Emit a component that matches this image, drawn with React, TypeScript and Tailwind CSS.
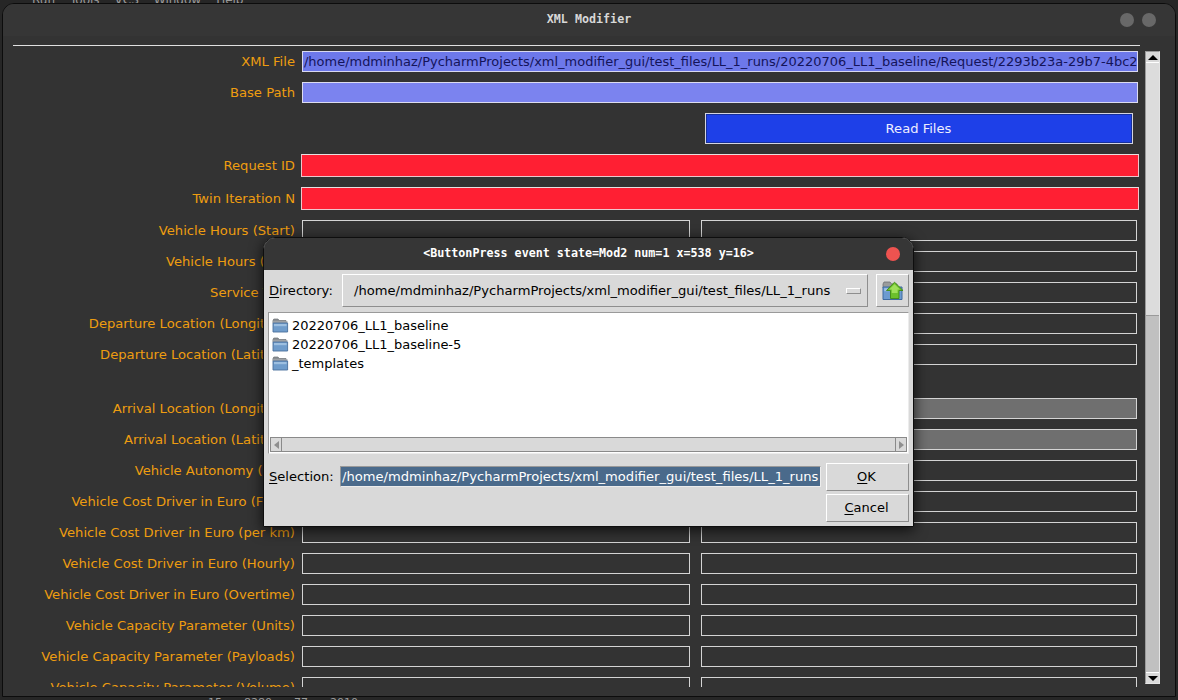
import React from "react";

const FONT = "font-['DejaVu_Sans',sans-serif]";
const MONO = "font-['DejaVu_Sans_Mono',monospace]";

const XML_PATH =
  "/home/mdminhaz/PycharmProjects/xml_modifier_gui/test_files/LL_1_runs/20220706_LL1_baseline/Request/2293b23a-29b7-4bc2";

function Label({ children }: { children: React.ReactNode }) {
  return (
    <div className="w-[282px] shrink-0 text-right text-[13.15px] leading-[21px] whitespace-nowrap text-[#ee9d10] flex justify-end items-center">
      {children}
    </div>
  );
}

function PairRow({ label, filled }: { label: string; filled?: boolean }) {
  return (
    <div className="flex h-[21px] shrink-0 items-stretch">
      <Label>{label}</Label>
      <div className="ml-[7px] w-[388px] border border-[#d4d4d4]" />
      <div
        className={
          filled
            ? "ml-[11px] w-[436px] border border-[#d4d4d4] bg-[#6f6f6f]"
            : "ml-[11px] w-[436px] border border-[#d4d4d4]"
        }
      />
    </div>
  );
}

function RedRow({ label }: { label: string }) {
  return (
    <div className="flex h-[23px] shrink-0 items-stretch">
      <Label>{label}</Label>
      <div className="ml-[6px] w-[838px] border border-[#efc6cc] border-t-[#e8e0e0] bg-[#ff1f33]" />
    </div>
  );
}

function FolderIcon() {
  return (
    <svg width="17" height="15" viewBox="0 0 17 15" className="shrink-0">
      <path d="M1 2.5 L1.8 1 H6 L7.2 2.5 H14 V5 H1 Z" fill="#8b8f94" stroke="#6e7277" strokeWidth="0.7" />
      <rect x="0.7" y="3.2" width="14.8" height="2" fill="#a3a7ab" />
      <path d="M1 5 H15.6 V14 H1 Z" fill="#6f9ccb" stroke="#4a6f9c" strokeWidth="0.9" />
      <rect x="2" y="6" width="12.6" height="2.2" fill="#9dbfe0" />
    </svg>
  );
}

function UpFolderIcon() {
  return (
    <svg width="22" height="20" viewBox="0 0 22 20">
      <path d="M1 3 L2 1 H8 L9.5 3 H15 V7 H1 Z" fill="#9a9c9c" stroke="#6f7173" strokeWidth="0.8" />
      <path d="M1 6 H20 V18.5 H1 Z" fill="#6c9bd0" stroke="#3f6aa0" strokeWidth="1" />
      <rect x="2.2" y="7.2" width="16.6" height="3" fill="#a0c2e4" />
      <path d="M12.5 1.2 L21 9.5 H17 V17.5 H8.5 V9.5 H4.5 Z" fill="#6cc02c" stroke="#3f8a12" strokeWidth="0.9" />
      <path d="M12.5 3.2 L18 8.6 H15.6 V12 H9.8 V8.6 H7.2 Z" fill="#9fe05a" />
    </svg>
  );
}

function U({ children }: { children: React.ReactNode }) {
  return <span className="underline underline-offset-2 decoration-1">{children}</span>;
}

const raised =
  "border-[1.5px] border-t-white border-l-white border-r-[#8e8e8e] border-b-[#8e8e8e]";

function Dialog() {
  return (
    <div className="absolute left-[263px] top-[237px] flex h-[290px] w-[651px] flex-col overflow-hidden rounded-t-[12px] border border-[#0e0e0e] bg-[#d9d9d9] shadow-[0_3px_14px_rgba(0,0,0,0.75)]">
      <div className="relative flex h-[32px] shrink-0 items-center justify-center bg-[#363636]">
        <span className={`${MONO} text-[11.7px] font-bold text-white whitespace-nowrap`}>
          {"<ButtonPress event state=Mod2 num=1 x=538 y=16>"}
        </span>
        <span className="absolute right-[13px] top-[9px] h-[14px] w-[14px] rounded-full bg-[#ee5350]" />
      </div>

      <div className="flex flex-1 flex-col pl-[5px] pr-[4px] pt-[4px] text-[13px] text-black">
        <div className="flex h-[33px] shrink-0 items-center">
          <span className="w-[73px] shrink-0 whitespace-nowrap text-[13.1px]">
            <U>D</U>irectory:
          </span>
          <div className={`flex h-full w-[526px] shrink-0 items-center justify-between pl-[11px] pr-[6px] ${raised}`}>
            <span className="whitespace-nowrap text-[13.1px]">
              /home/mdminhaz/PycharmProjects/xml_modifier_gui/test_files/LL_1_runs
            </span>
            <span className={`block h-[6px] w-[15px] ${raised}`} />
          </div>
          <div className={`ml-[8px] flex h-full w-[33px] shrink-0 items-center justify-center ${raised}`}>
            <UpFolderIcon />
          </div>
        </div>

        <div className="-ml-px mt-[5px] flex h-[142px] w-[641px] shrink-0 flex-col border border-[#ececec] border-t-[#9a9a9a] border-l-[#9a9a9a] bg-white">
          <div className="flex flex-1 flex-col pl-[3px] pt-[3px]">
            {["20220706_LL1_baseline", "20220706_LL1_baseline-5", "_templates"].map((name) => (
              <div key={name} className="flex h-[19px] items-center gap-[3px] whitespace-nowrap">
                <FolderIcon />
                <span>{name}</span>
              </div>
            ))}
          </div>
          <div className="mx-[1px] mb-[1px] flex h-[15px] shrink-0 items-stretch border border-[#8a8a8a] bg-[#d9d9d9]">
            <div className="flex w-[11px] items-center justify-center border-r border-[#8a8a8a]">
              <span className="h-0 w-0 border-y-[4px] border-r-[5px] border-y-transparent border-r-[#8f8f8f]" />
            </div>
            <div className="flex-1" />
            <div className="flex w-[11px] items-center justify-center border-l border-[#8a8a8a]">
              <span className="h-0 w-0 border-y-[4px] border-l-[5px] border-y-transparent border-l-[#8f8f8f]" />
            </div>
          </div>
        </div>

        <div className="mt-[9px] flex flex-1">
          <div className="flex h-[28px] w-[557px] shrink-0 items-start">
            <span className="w-[71px] shrink-0 whitespace-nowrap text-[13.1px] leading-[27px]">
              <U>S</U>election:
            </span>
            <div className="mt-[3px] h-[21px] w-[481px] shrink-0 overflow-hidden border border-[#999] border-r-[#ececec] border-b-[#ececec] bg-[#4a6a8b] pl-[1px] text-[13.1px] leading-[19px] whitespace-nowrap text-white">
              /home/mdminhaz/PycharmProjects/xml_modifier_gui/test_files/LL_1_runs
            </div>
          </div>
          <div className="flex w-[83px] shrink-0 flex-col gap-[3px]">
            <div className={`flex h-[28px] items-center justify-center pr-[2px] ${raised}`}>
              <span>
                <U>O</U>K
              </span>
            </div>
            <div className={`flex h-[28px] items-center justify-center pr-[2px] ${raised}`}>
              <span>
                <U>C</U>ancel
              </span>
            </div>
          </div>
        </div>
      </div>
    </div>
  );
}

function Scrollbar() {
  return (
    <div className="mt-[15px] flex h-[633px] w-[15px] shrink-0 flex-col border-[1.5px] border-[#e4e4e4] border-l-[#9a9a9a] border-t-[#9a9a9a] bg-[#c0c0c0]">
      <div className="flex h-[11px] shrink-0 items-center justify-center border-b border-white bg-[#d9d9d9]">
        <span className="h-0 w-0 border-x-[5px] border-b-[5px] border-x-transparent border-b-black" />
      </div>
      <div className="h-[253px] shrink-0 border-b border-[#9a9a9a] bg-[#dcdcdc]" />
      <div className="flex-1" />
      <div className="flex h-[11px] shrink-0 items-center justify-center border-t border-white bg-[#d9d9d9]">
        <span className="h-0 w-0 border-x-[5px] border-t-[5px] border-x-transparent border-t-black" />
      </div>
    </div>
  );
}

export default function App() {
  return (
    <div className={`${FONT} relative h-[700px] w-[1178px] overflow-hidden bg-[#262626]`}>
      {/* desktop behind the window */}
      <div className="absolute left-[32px] top-[-9px] flex gap-[15px] text-[12px] text-[#9a9a9a] whitespace-nowrap">
        <span>Run</span>
        <span>Tools</span>
        <span>VCS</span>
        <span>Window</span>
        <span>Help</span>
      </div>
      <div className="absolute left-[208px] top-[695px] flex gap-[22px] text-[11px] text-[#9a9a9a] whitespace-nowrap">
        <span>15</span>
        <span>8280</span>
        <span>77</span>
        <span>2010</span>
      </div>

      {/* main window */}
      <div className="absolute left-[2px] top-[3px] flex h-[694px] w-[1174px] flex-col overflow-hidden rounded-t-[12px] border border-[#0c0c0c] bg-[#333333]">
        <div className="relative flex h-[32px] shrink-0 items-center justify-center bg-[#363636]">
          <span className={`${MONO} text-[11.7px] font-bold text-[#d8d8d8]`}>XML Modifier</span>
          <span className="absolute right-[41px] top-[9px] h-[14px] w-[14px] rounded-full bg-[#686868]" />
          <span className="absolute right-[19px] top-[9px] h-[14px] w-[14px] rounded-full bg-[#686868]" />
        </div>

        <div className="flex flex-1 pl-[10px]">
          <div className="flex w-[1127px] shrink-0 flex-col pt-[9px]">
            <div className="h-px shrink-0 bg-[#e0e0e0]" />
            <div className="mt-[5px] flex h-[636px] flex-col gap-[10px] overflow-hidden">
              <div className="flex h-[21px] shrink-0 items-stretch">
                <Label>XML File</Label>
                <div className="ml-[7px] w-[836px] overflow-hidden whitespace-nowrap border border-[#d8d8f0] bg-[#6d78ea] pl-[1px] text-[12.97px] leading-[19px] text-[#14145a]">
                  {XML_PATH}
                </div>
              </div>
              <div className="flex h-[21px] shrink-0 items-stretch">
                <Label>Base Path</Label>
                <div className="ml-[7px] w-[836px] border border-[#dcdcf0] bg-[#7b83ef]" />
              </div>
              <div className="flex h-[31px] shrink-0 justify-end pr-[7px]">
                <div className="flex w-[428px] items-center justify-center border border-[#d4d4e0] bg-[#1e40e8] pr-[1px] text-[13.1px] text-[#eeeeff] shadow-[inset_0_0_0_1px_#16309c]">
                  Read Files
                </div>
              </div>
              <RedRow label="Request ID" />
              <RedRow label="Twin Iteration N" />
              <PairRow label="Vehicle Hours (Start)" />
              <PairRow label="Vehicle Hours (End)" />
              <PairRow label="Service Time" />
              <PairRow label="Departure Location (Longitude)" />
              <PairRow label="Departure Location (Latitude)" />
              <div className="h-[13px] shrink-0" />
              <PairRow label="Arrival Location (Longitude)" filled />
              <PairRow label="Arrival Location (Latitude)" filled />
              <PairRow label="Vehicle Autonomy (kms)" />
              <PairRow label="Vehicle Cost Driver in Euro (Fixed)" />
              <PairRow label="Vehicle Cost Driver in Euro (per km)" />
              <PairRow label="Vehicle Cost Driver in Euro (Hourly)" />
              <PairRow label="Vehicle Cost Driver in Euro (Overtime)" />
              <PairRow label="Vehicle Capacity Parameter (Units)" />
              <PairRow label="Vehicle Capacity Parameter (Payloads)" />
              <PairRow label="Vehicle Capacity Parameter (Volume)" />
            </div>
          </div>
          <div className="w-[5px] shrink-0" />
          <Scrollbar />
        </div>
      </div>

      <Dialog />
    </div>
  );
}
